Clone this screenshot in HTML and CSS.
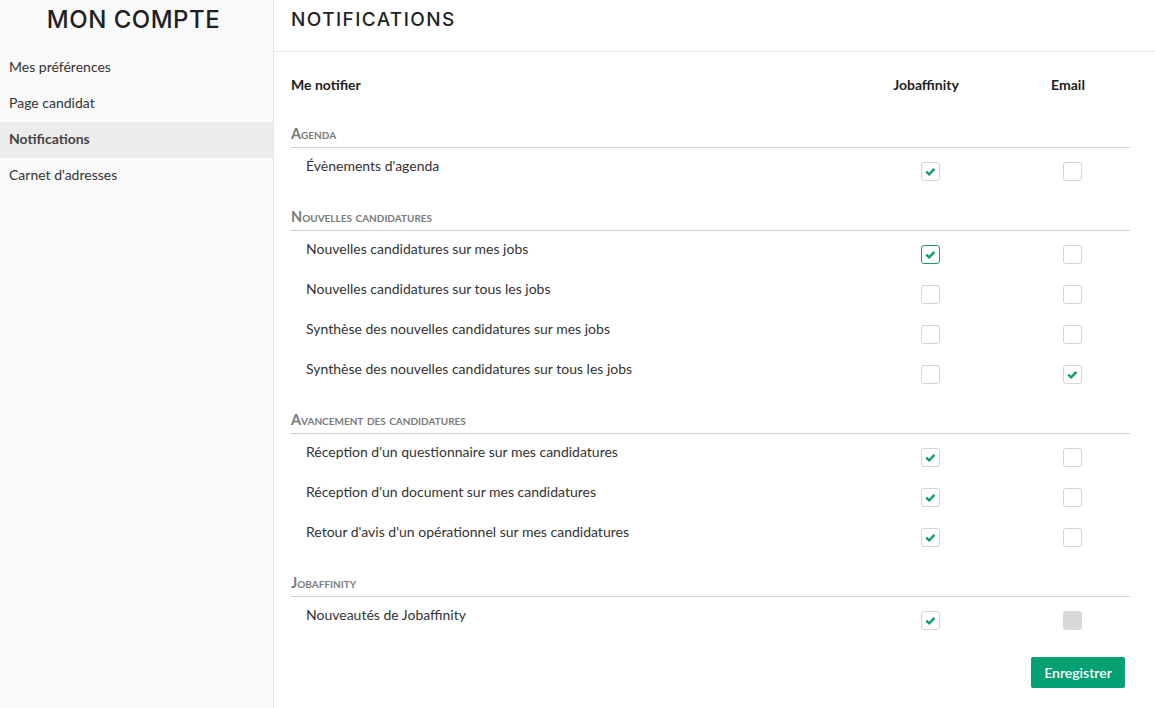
FILE: index.html
```html
<!DOCTYPE html>
<html lang="fr">
<head>
<meta charset="utf-8">
<title>Notifications</title>
<link rel="stylesheet" href="styles.css">
</head>
<body>
<div class="layout">
  <aside class="sidebar">
    <h1 class="side-title">MON COMPTE</h1>
    <nav class="side-nav">
      <a class="nav-item">Mes préférences</a>
      <a class="nav-item">Page candidat</a>
      <a class="nav-item active">Notifications</a>
      <a class="nav-item">Carnet d'adresses</a>
    </nav>
  </aside>
  <main class="main">
    <header class="main-header"><h2 class="main-title">NOTIFICATIONS</h2></header>
    <div class="content">
      <div class="grid head">
        <div class="col-label">Me notifier</div>
        <div class="col-h">Jobaffinity</div>
        <div class="col-h">Email</div>
      </div>

      <div class="section">Agenda</div>
      <div class="grid row">
        <div class="label">Évènements d'agenda</div>
        <div class="cell"><span class="cb checked"><svg viewBox="0 0 18 18"><path d="M4.5 9.2 L7.6 12 L13.2 6.2"/></svg></span></div>
        <div class="cell"><span class="cb"></span></div>
      </div>

      <div class="section">Nouvelles candidatures</div>
      <div class="grid row">
        <div class="label">Nouvelles candidatures sur mes jobs</div>
        <div class="cell"><span class="cb checked focus"><svg viewBox="0 0 18 18"><path d="M4.5 9.2 L7.6 12 L13.2 6.2"/></svg></span></div>
        <div class="cell"><span class="cb"></span></div>
      </div>
      <div class="grid row">
        <div class="label">Nouvelles candidatures sur tous les jobs</div>
        <div class="cell"><span class="cb"></span></div>
        <div class="cell"><span class="cb"></span></div>
      </div>
      <div class="grid row">
        <div class="label">Synthèse des nouvelles candidatures sur mes jobs</div>
        <div class="cell"><span class="cb"></span></div>
        <div class="cell"><span class="cb"></span></div>
      </div>
      <div class="grid row">
        <div class="label">Synthèse des nouvelles candidatures sur tous les jobs</div>
        <div class="cell"><span class="cb"></span></div>
        <div class="cell"><span class="cb checked"><svg viewBox="0 0 18 18"><path d="M4.5 9.2 L7.6 12 L13.2 6.2"/></svg></span></div>
      </div>

      <div class="section">Avancement des candidatures</div>
      <div class="grid row">
        <div class="label">Réception d'un questionnaire sur mes candidatures</div>
        <div class="cell"><span class="cb checked"><svg viewBox="0 0 18 18"><path d="M4.5 9.2 L7.6 12 L13.2 6.2"/></svg></span></div>
        <div class="cell"><span class="cb"></span></div>
      </div>
      <div class="grid row">
        <div class="label">Réception d'un document sur mes candidatures</div>
        <div class="cell"><span class="cb checked"><svg viewBox="0 0 18 18"><path d="M4.5 9.2 L7.6 12 L13.2 6.2"/></svg></span></div>
        <div class="cell"><span class="cb"></span></div>
      </div>
      <div class="grid row">
        <div class="label">Retour d'avis d'un opérationnel sur mes candidatures</div>
        <div class="cell"><span class="cb checked"><svg viewBox="0 0 18 18"><path d="M4.5 9.2 L7.6 12 L13.2 6.2"/></svg></span></div>
        <div class="cell"><span class="cb"></span></div>
      </div>

      <div class="section">Jobaffinity</div>
      <div class="grid row">
        <div class="label">Nouveautés de Jobaffinity</div>
        <div class="cell"><span class="cb checked"><svg viewBox="0 0 18 18"><path d="M4.5 9.2 L7.6 12 L13.2 6.2"/></svg></span></div>
        <div class="cell"><span class="cb disabled"></span></div>
      </div>

      <div class="actions"><button class="btn">Enregistrer</button></div>
    </div>
  </main>
</div>
</body>
</html>
```

FILE: styles.css
```css
* { box-sizing: border-box; }
html, body { margin: 0; padding: 0; }
body {
  font-family: Lato, "Liberation Sans", sans-serif;
  font-size: 14px;
  color: #333;
  background: #fff;
}
.layout {
  display: flex;
  height: 708px;
}
.sidebar {
  width: 274px;
  flex: none;
  background: #f9f9f9;
  border-right: 1px solid #e6e6e6;
}
.side-title {
  margin: 0;
  height: 50px;
  padding-top: 5px;
  text-align: center;
  font-family: Inter, "DejaVu Sans", sans-serif;
  font-weight: 500;
  font-size: 24px;
  line-height: 30px;
  letter-spacing: 0.5px;
  color: #1f1f24;
  padding-right: 6px;
}
.side-nav { display: flex; flex-direction: column; }
.nav-item {
  display: block;
  height: 36px;
  line-height: 34px;
  padding-left: 9px;
  font-size: 14px;
  color: #333;
}
.nav-item.active {
  background: #ececec;
  font-weight: 700;
  color: #444;
}
.main { flex: 1; min-width: 0; }
.main-header {
  height: 52px;
  border-bottom: 1px solid #e8e8e8;
  padding-left: 17px;
}
.main-title {
  margin: 0;
  padding-top: 8px;
  font-family: Inter, "DejaVu Sans", sans-serif;
  font-weight: 500;
  font-size: 19px;
  line-height: 24px;
  letter-spacing: 1.4px;
  color: #1f1f24;
}
.content {
  padding: 0 25px 0 17px;
}
.grid {
  display: grid;
  grid-template-columns: 1fr 120px 120px;
  column-gap: 22px;
}
.head {
  height: 53px;
  padding-top: 23px;
  line-height: 20px;
  font-weight: 700;
  color: #222;
}
.col-h { text-align: center; padding-right: 4px; }
.section {
  height: 43px;
  border-bottom: 1px solid #cfcfcf;
  display: flex;
  align-items: flex-end;
  padding-bottom: 5px;
  line-height: 16px;
  font-size: 14.5px;
  font-weight: 700;
  font-variant: small-caps;
  color: #7a7a7a;
}
.row { height: 40px; }
.label {
  padding-left: 15px;
  padding-top: 8px;
  line-height: 20px;
  color: #333;
}
.cell {
  display: flex;
  justify-content: center;
  padding-top: 14px;
  padding-left: 4px;
}
.cb {
  width: 19px;
  height: 19px;
  border: 1px solid #d4d4d4;
  border-radius: 3px;
  background: #fff;
  display: block;
}
.cb svg { width: 17px; height: 17px; display: block; }
.cb path {
  fill: none;
  stroke: #0a9d6d;
  stroke-width: 2.6;
  stroke-linecap: butt;
  stroke-linejoin: miter;
}
.cb.focus { border-color: #1a9a6c; }
.cb.disabled { background: #d6d8d9; border-color: #d6d8d9; }
.actions {
  display: flex;
  justify-content: flex-end;
  padding-top: 20px;
  padding-right: 5px;
}
.btn {
  font-family: Lato, "Liberation Sans", sans-serif;
  font-size: 14px;
  font-weight: 600;
  color: #fff;
  background: #03a073;
  border: none;
  border-radius: 2px;
  width: 94px;
  height: 31px;
  padding: 0;
}
```
